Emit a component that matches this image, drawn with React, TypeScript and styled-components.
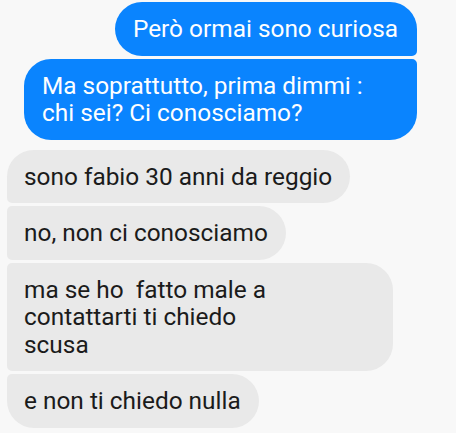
import React from "react";
import styled, { createGlobalStyle } from "styled-components";

const Global = createGlobalStyle`
  html, body { margin: 0; padding: 0; background: #f8f8f8; }
  body { font-family: Roboto, "Noto Sans", sans-serif; }
`;

const Thread = styled.div`
  display: flex;
  flex-direction: column;
  gap: 3px;
  padding: 2px 39px 0 7px;
  width: 456px;
  height: 433px;
  box-sizing: border-box;
  overflow: hidden;
  background: #f8f8f8;
`;

type Pos = "first" | "middle" | "last" | "single";

const big = "27px";
const small = "5px";

const Bubble = styled.div<{ $mine?: boolean; $pos: Pos; $w?: number }>`
  align-self: ${(p) => (p.$mine ? "flex-end" : "flex-start")};
  flex-shrink: 0;
  box-sizing: border-box;
  ${(p) => (p.$w ? `width: ${p.$w}px;` : "")}
  padding: 13px ${(p) => (p.$mine ? "19px 13px 18px" : "18px 13px 17px")};
  font-size: 24.4px;
  line-height: 27.5px;
  white-space: pre;
  color: ${(p) => (p.$mine ? "#fdfeff" : "#1b1b1b")};
  background: ${(p) => (p.$mine ? "#0a84fe" : "#e9e9e9")};
  border-radius: ${(p) => {
    const tIn = p.$pos === "first" || p.$pos === "single" ? big : small;
    const bIn = p.$pos === "last" || p.$pos === "single" ? big : small;
    return p.$mine
      ? `${big} ${tIn} ${bIn} ${big}`
      : `${tIn} ${big} ${big} ${bIn}`;
  }};
`;

const GroupBreak = styled.div`
  height: 4px;
  flex-shrink: 0;
`;

export default function App() {
  return (
    <>
      <Global />
      <Thread>
        <Bubble $mine $pos="first">Però ormai sono curiosa</Bubble>
        <Bubble $mine $pos="last" $w={393}>
          {"Ma soprattutto, prima dimmi :\nchi sei? Ci conosciamo?"}
        </Bubble>
        <GroupBreak />
        <Bubble $pos="first">sono fabio 30 anni da reggio</Bubble>
        <Bubble $pos="middle">no, non ci conosciamo</Bubble>
        <Bubble $pos="middle" $w={386}>
          {"ma se ho  fatto male a\ncontattarti ti chiedo\nscusa"}
        </Bubble>
        <Bubble $pos="last">e non ti chiedo nulla</Bubble>
      </Thread>
    </>
  );
}
